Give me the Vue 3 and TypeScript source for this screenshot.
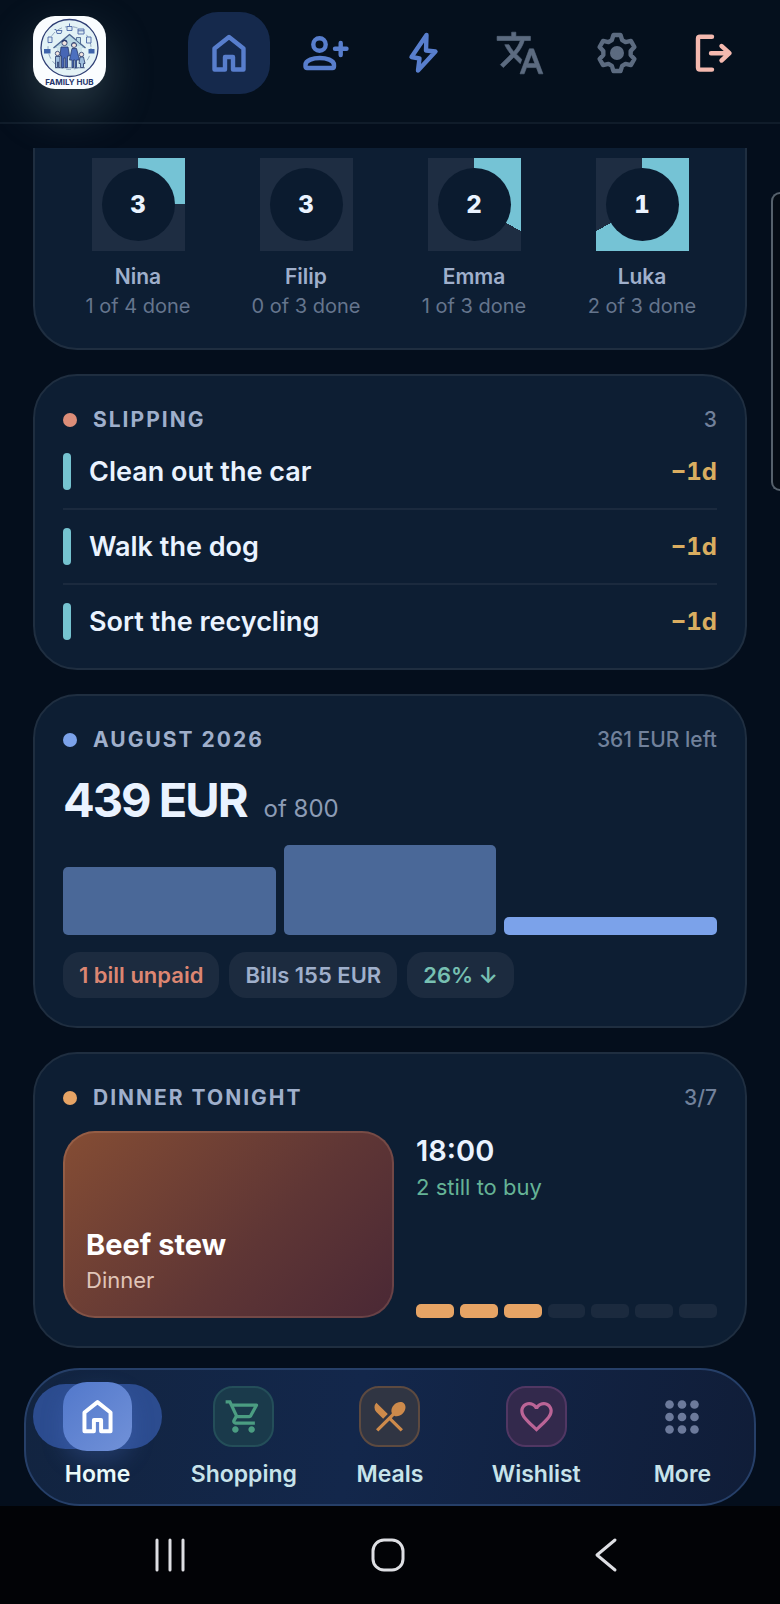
<script setup lang="ts">
interface Member {
  name: string
  left: number
  done: number
  total: number
}

interface Segment {
  id: number
  filled: boolean
}

const members: Member[] = [
  { name: 'Nina', left: 3, done: 1, total: 4 },
  { name: 'Filip', left: 3, done: 0, total: 3 },
  { name: 'Emma', left: 2, done: 1, total: 3 },
  { name: 'Luka', left: 1, done: 2, total: 3 },
]

const slipping = [
  { title: 'Clean out the car', late: '−1d' },
  { title: 'Walk the dog', late: '−1d' },
  { title: 'Sort the recycling', late: '−1d' },
]

const spending = [
  { id: 'june', share: 76, current: false },
  { id: 'july', share: 100, current: false },
  { id: 'august', share: 20, current: true },
]

const week: Segment[] = Array.from({ length: 7 }, (_, i) => ({ id: i, filled: i < 3 }))

const dots = [12, 25, 38].flatMap((y) => [12, 25, 38].map((x) => ({ x, y })))

const ringStyle = (m: Member) => {
  const turn = (m.done / m.total) * 360
  return { background: `conic-gradient(#75c3d5 ${turn}deg, #1e2d42 ${turn}deg)` }
}

const polar = (deg: number, r: number) => {
  const a = (deg * Math.PI) / 180
  return `${(25 + r * Math.cos(a)).toFixed(2)} ${(25 + r * Math.sin(a)).toFixed(2)}`
}

const gearPath =
  'M' +
  [0, 1, 2, 3, 4, 5]
    .flatMap((k) => {
      const a = k * 60 - 90
      return [polar(a - 22, 13.8), polar(a - 11, 18.4), polar(a + 11, 18.4), polar(a + 22, 13.8)]
    })
    .join('L') +
  'Z'

const homePath = 'M10.5 20.5 25 9 39.5 20.5V41.5H29V29H21V41.5H10.5Z'
</script>

<template>
  <div class="app">
    <header class="topbar">
      <svg class="logo" viewBox="0 0 73 73" role="img" aria-label="Family Hub">
        <rect width="73" height="73" fill="#fafdff" />
        <circle cx="36.500" cy="32" r="28.500" fill="#e3f2f6" stroke="#2f3f75" stroke-width="1.300" />
        <circle cx="36.500" cy="32" r="21.500" fill="none" stroke="#6d86a8" stroke-width=".7" stroke-dasharray="5 3" />
        <path d="M20.500 32 36.500 18.500 52.500 32" fill="#b9d8e4" stroke="#4c6591" stroke-width="1.400" stroke-linejoin="round" />
        <path d="M24 30h25v21H24z" fill="#cfe5ec" />
        <path d="M43.500 21.500h4v6.500l-4-3.500z" fill="#b9d8e4" stroke="#4c6591" stroke-width=".9" />
        <g fill="#dcebf2" stroke="#4a65a5" stroke-width=".9">
          <path d="M34 10.500h5v4h-5zM36.500 7.500v3" />
          <path d="M45 13h6v5h-6zM45 14.800h6" />
          <path d="M53.500 21h4.500v6h-4.500z" />
          <path d="M15 21h4v5.500h-4z" />
          <path d="M21.500 13.500h1.500l1 4h4l1-3h-5.500" />
        </g>
        <path d="M11 33h6.500v4.500H11zM55.500 33h6v4.500h-6z" fill="#3f64ab" />
        <path d="M22 51.800h30" stroke="#4c6591" stroke-width=".8" />
        <g stroke="#27386b" stroke-width=".8">
          <circle cx="31.500" cy="27" r="2.600" fill="#f1e4de" />
          <path d="M28 31h7l1.500 9h-2V51.500h-2.300V42h-1.200v9.500h-2.500V40h-1.500z" fill="#4766b5" />
          <circle cx="41" cy="29" r="2.500" fill="#f1e4de" />
          <path d="M39 32.500h4.500l3 11.500h-3V51.500h-1.500V44h-1.500v7.500H39V44h-2.500z" fill="#4c70bf" />
          <circle cx="24.500" cy="37.500" r="2.200" fill="#f1e4de" />
          <path d="M22.500 40.500h4.500V51.500h-1.500V46h-1v5.500h-2z" fill="#9dbddc" />
          <circle cx="48.500" cy="38.500" r="2.200" fill="#f1e4de" />
          <path d="M47 41h3.500l1.500 6.500h-1.500v4h-3v-4H46z" fill="#9dbddc" />
        </g>
        <path d="M28.600 26.500c0-4 5.800-4 5.800 0l-2.900-1.500zM38.400 31c-1-6 6-6 5.300 0l-1.200-3.500h-3z" fill="#27386b" />
        <text class="logo-text" x="36.500" y="69" text-anchor="middle">FAMILY HUB</text>
      </svg>

      <nav class="tools" aria-label="Quick actions">
        <button class="tool active" type="button" aria-label="Home">
          <svg viewBox="0 0 50 50" class="line"><path :d="homePath" /></svg>
        </button>
        <button class="tool" type="button" aria-label="Add member">
          <svg viewBox="0 0 50 50" class="line">
            <circle cx="18.500" cy="16.500" r="6.200" />
            <path d="M4.500 38.500V37C4.500 32 12.500 30 18.750 30S33 32 33 37V38.500Q33 40 31.500 40H6Q4.500 40 4.500 38.500ZM34 20.700H45.500M39.700 15V27" />
          </svg>
        </button>
        <button class="tool" type="button" aria-label="Quick add">
          <svg viewBox="0 0 50 50" class="line"><path d="M28.500 7 13.500 29 21.500 30.500 20 42.500 37.500 23.500 28 22.500Z" /></svg>
        </button>
        <button class="tool muted" type="button" aria-label="Language">
          <svg viewBox="0 0 24 24" fill="currentColor" stroke="currentColor" stroke-width=".3" stroke-linejoin="round">
            <path d="M12.870 15.070l-2.540-2.510.03-.03c1.740-1.940 2.980-4.170 3.710-6.530H17V4h-7V2H8v2H1v1.990h11.170C11.500 7.920 10.440 9.750 9 11.350 8.070 10.320 7.300 9.190 6.690 8h-2c.73 1.630 1.730 3.170 2.980 4.560l-5.090 5.020L4 19l5-5 3.110 3.110.76-2.040zM18.500 10h-2L12 22h2l1.120-3h4.750L21 22h2l-4.500-12zm-2.620 7l1.620-4.330L19.120 17h-3.240z" />
          </svg>
        </button>
        <button class="tool muted" type="button" aria-label="Settings">
          <svg viewBox="0 0 50 50" class="line">
            <path :d="gearPath" />
            <circle cx="25" cy="25" r="4.800" fill="currentColor" />
          </svg>
        </button>
        <button class="tool exit" type="button" aria-label="Log out">
          <svg viewBox="0 0 50 50" class="line"><path d="M23 8.700H11Q9 8.700 9 10.700V39.600Q9 41.600 11 41.600H23M22 25.200H39M32.500 18 40.500 25.200 32.500 32.500" /></svg>
        </button>
      </nav>
    </header>

    <main class="feed">
      <section class="card clipped" aria-label="Family progress">
        <ul class="members">
          <li v-for="m in members" :key="m.name" class="member">
            <div class="ring" :style="ringStyle(m)">
              <span class="ring-core">{{ m.left }}</span>
            </div>
            <span class="member-name">{{ m.name }}</span>
            <span class="member-sub">{{ m.done }} of {{ m.total }} done</span>
          </li>
        </ul>
      </section>

      <section class="card">
        <div class="card-head">
          <span class="dot coral"></span>
          <h2>Slipping</h2>
          <span class="meta">3</span>
        </div>
        <ul class="tasks">
          <li v-for="t in slipping" :key="t.title" class="task">
            <span class="task-bar"></span>
            <span class="task-title">{{ t.title }}</span>
            <span class="task-late">{{ t.late }}</span>
          </li>
        </ul>
      </section>

      <section class="card">
        <div class="card-head">
          <span class="dot blue"></span>
          <h2>August 2026</h2>
          <span class="meta">361 EUR left</span>
        </div>
        <p class="amount"><strong>439 EUR</strong><span>of 800</span></p>
        <div class="bars">
          <span
            v-for="b in spending"
            :key="b.id"
            class="bar"
            :class="{ current: b.current }"
            :style="{ height: b.share + '%' }"
          ></span>
        </div>
        <div class="chips">
          <span class="chip warn">1 bill unpaid</span>
          <span class="chip">Bills 155 EUR</span>
          <span class="chip good">26% ↓</span>
        </div>
      </section>

      <section class="card">
        <div class="card-head">
          <span class="dot amber"></span>
          <h2>Dinner tonight</h2>
          <span class="meta">3/7</span>
        </div>
        <div class="dinner">
          <div class="dish">
            <span class="dish-name">Beef stew</span>
            <span class="dish-kind">Dinner</span>
          </div>
          <div class="dinner-info">
            <span class="time">18:00</span>
            <span class="to-buy">2 still to buy</span>
            <div class="week">
              <span v-for="s in week" :key="s.id" class="day" :class="{ filled: s.filled }"></span>
            </div>
          </div>
        </div>
      </section>
    </main>

    <nav class="tabs" aria-label="Main">
      <a class="tab" href="#home" aria-current="page">
        <span class="slot current">
          <span class="tile tile-home">
            <svg viewBox="0 0 50 50" class="line"><path :d="homePath" /></svg>
          </span>
        </span>
        <span class="tab-label">Home</span>
      </a>
      <a class="tab" href="#shopping">
        <span class="slot">
          <span class="tile tile-shopping">
            <svg viewBox="0 0 24 24" fill="currentColor">
              <path d="M15.550 13c.75 0 1.410-.41 1.750-1.030l3.580-6.490A.996.996 0 0 0 20.010 4H5.210l-.94-2H1v2h2l3.600 7.590-1.350 2.440C4.520 15.370 5.480 17 7 17h12v-2H7l1.100-2h7.450zM6.160 6h12.150l-2.760 5H8.530L6.160 6zM7 18c-1.100 0-1.990.9-1.990 2S5.900 22 7 22s2-.9 2-2-.9-2-2-2zm10 0c-1.100 0-1.990.9-1.990 2s.89 2 1.990 2 2-.9 2-2-.9-2-2-2z" />
            </svg>
          </span>
        </span>
        <span class="tab-label">Shopping</span>
      </a>
      <a class="tab" href="#meals">
        <span class="slot">
          <span class="tile tile-meals">
            <svg viewBox="0 0 24 24" fill="currentColor">
              <path d="M8.100 13.340l2.830-2.830L3.910 3.500a4.008 4.008 0 0 0 0 5.660l4.190 4.180zm6.780-1.810c1.530.71 3.680.21 5.270-1.380 1.910-1.910 2.280-4.650.81-6.120-1.460-1.460-4.200-1.100-6.120.81-1.590 1.590-2.090 3.740-1.380 5.270L3.700 19.870l1.410 1.410L12 14.410l6.880 6.880 1.410-1.410L13.410 13l1.470-1.470z" />
            </svg>
          </span>
        </span>
        <span class="tab-label">Meals</span>
      </a>
      <a class="tab" href="#wishlist">
        <span class="slot">
          <span class="tile tile-wishlist">
            <svg viewBox="0 0 24 24" fill="currentColor">
              <path d="M16.500 3c-1.740 0-3.410.81-4.500 2.090C10.910 3.810 9.240 3 7.500 3 4.420 3 2 5.420 2 8.500c0 3.780 3.400 6.860 8.550 11.540L12 21.350l1.450-1.320C18.600 15.360 22 12.280 22 8.500 22 5.420 19.580 3 16.500 3zm-4.400 15.550l-.1.1-.1-.1C7.140 14.240 4 11.390 4 8.500 4 6.500 5.500 5 7.500 5c1.540 0 3.040.99 3.570 2.360h1.870C13.460 5.990 14.960 5 16.500 5c2 0 3.500 1.500 3.500 3.500 0 2.890-3.140 5.740-7.900 10.050z" />
            </svg>
          </span>
        </span>
        <span class="tab-label">Wishlist</span>
      </a>
      <a class="tab" href="#more">
        <span class="slot">
          <span class="tile tile-more">
            <svg viewBox="0 0 50 50" fill="currentColor">
              <circle v-for="d in dots" :key="d.x + '-' + d.y" :cx="d.x" :cy="d.y" r="4.500" />
            </svg>
          </span>
        </span>
        <span class="tab-label">More</span>
      </a>
    </nav>

    <footer class="system">
      <button type="button" aria-label="Recent apps">
        <svg viewBox="0 0 36 36"><path d="M5 3V33M18 3V33M31 3V33" /></svg>
      </button>
      <button type="button" aria-label="Home screen">
        <svg viewBox="0 0 36 36"><rect x="3" y="3" width="30" height="30" rx="11" /></svg>
      </button>
      <button type="button" aria-label="Back">
        <svg viewBox="0 0 36 36"><path d="M27 3 9 18 27 33" /></svg>
      </button>
    </footer>

    <div class="edge-panel" aria-hidden="true"></div>
  </div>
</template>

<style>
html,
body {
  background: #020306;
}
</style>

<style scoped>
.app {
  position: relative;
  display: flex;
  flex-direction: column;
  min-height: 100vh;
  overflow: hidden;
  background: #040e1c;
  color: #eaf3ff;
  font-family: Inter, 'Liberation Sans', sans-serif;
  font-size: 21px;
}

.app *,
.app {
  box-sizing: border-box;
}

ul,
p,
h2 {
  margin: 0;
  padding: 0;
  list-style: none;
}

button {
  padding: 0;
  border: 0;
  background: none;
  color: inherit;
  font: inherit;
  cursor: pointer;
}

.line {
  fill: none;
  stroke: currentColor;
  stroke-width: 4.4;
  stroke-linecap: round;
  stroke-linejoin: round;
}

.topbar {
  display: flex;
  align-items: flex-start;
  justify-content: space-between;
  padding: 12px 25px 28px 33px;
  border-bottom: 2px solid #101c2a;
  background: #05101d;
}

.logo {
  width: 73px;
  height: 73px;
  margin-top: 4px;
  border-radius: 22px;
  box-shadow: 0 20px 48px rgba(150, 185, 190, 0.26);
}

.logo-text {
  fill: #26356b;
  font-size: 8px;
  font-weight: 700;
}

.tools {
  display: flex;
  gap: 15px;
}

.tool {
  display: grid;
  place-items: center;
  width: 82px;
  height: 82px;
  border-radius: 30px;
  color: #587ecd;
}

.tool svg {
  width: 50px;
  height: 50px;
}

.tool.active {
  background: #15294c;
}

.tool.muted {
  color: #5c6b80;
}

.tool.exit {
  color: #f4b9af;
}

.feed {
  display: flex;
  flex-direction: column;
  gap: 24px;
  padding: 24px 33px 20px;
}

.card {
  display: flex;
  flex-direction: column;
  gap: 18px;
  padding: 28px;
  border: 2px solid #1f2e40;
  border-radius: 44px;
  background: #0d1e33;
}

.card.clipped {
  padding-top: 10px;
  border-top: 0;
  border-radius: 0 0 44px 44px;
}

.card-head {
  display: flex;
  align-items: center;
  gap: 16px;
  height: 31px;
}

.card-head h2 {
  flex: 1;
  color: #9fafcb;
  font-size: 21px;
  font-weight: 700;
  letter-spacing: 2px;
  text-transform: uppercase;
}

.dot {
  width: 14px;
  height: 14px;
  border-radius: 50%;
}

.coral {
  background: #dc8d78;
}

.blue {
  background: #7ba2ea;
}

.amber {
  background: #e6a465;
}

.meta {
  color: #71819b;
  font-weight: 500;
}

.members {
  display: grid;
  grid-template-columns: repeat(4, 1fr);
  gap: 18px;
}

.member {
  display: flex;
  flex-direction: column;
  align-items: center;
}

.ring {
  display: grid;
  place-items: center;
  width: 93px;
  height: 93px;
  margin-bottom: 11px;
}

.ring-core {
  display: grid;
  place-items: center;
  width: 73px;
  height: 73px;
  border-radius: 50%;
  background: #0b1b2f;
  font-size: 24px;
  font-weight: 800;
  font-variant-numeric: tabular-nums;
}

.member-name {
  color: #9fafcb;
  font-size: 21px;
  font-weight: 600;
  line-height: 30px;
}

.member-sub {
  color: #65758d;
  font-size: 20px;
  line-height: 28px;
  white-space: nowrap;
}

.task {
  display: flex;
  align-items: center;
  gap: 18px;
  padding: 18px 0;
  border-bottom: 2px solid #1b2a3e;
}

.task:first-child {
  padding-top: 0;
}

.task:last-child {
  padding-bottom: 0;
  border-bottom: 0;
}

.task-bar {
  width: 8px;
  height: 37px;
  border-radius: 4px;
  background: #75c3d0;
}

.task-title {
  flex: 1;
  font-size: 27px;
  font-weight: 600;
  line-height: 36px;
}

.task-late {
  color: #d9ad60;
  font-size: 24px;
  font-weight: 700;
  font-variant-numeric: tabular-nums;
}

.amount {
  display: flex;
  align-items: baseline;
  gap: 17px;
  height: 54px;
  line-height: 54px;
}

.amount strong {
  font-size: 47px;
  font-weight: 700;
  letter-spacing: -2px;
}

.amount span {
  color: #8c9bb5;
  font-size: 24px;
}

.bars {
  display: grid;
  grid-template-columns: repeat(3, 1fr);
  align-items: end;
  gap: 8px;
  height: 90px;
}

.bar {
  border-radius: 5px;
  background: #4a6898;
}

.bar.current {
  background: #7ba2ea;
}

.chips {
  display: flex;
  gap: 10px;
  margin-top: -1px;
}

.chip {
  padding: 0 16px;
  border-radius: 17px;
  background: #1c2b3f;
  color: #9fafcb;
  font-size: 22px;
  font-weight: 600;
  line-height: 46px;
}

.chip.warn {
  color: #dc8672;
}

.chip.good {
  color: #77c0b2;
}

.dinner {
  display: grid;
  grid-template-columns: 11fr 10fr;
  gap: 22px;
  min-height: 187px;
}

.dish {
  display: flex;
  flex-direction: column;
  justify-content: flex-end;
  padding: 20px 21px;
  border: 2px solid rgba(255, 190, 160, 0.16);
  border-radius: 32px;
  background: linear-gradient(135deg, #854d34, #5f3635 58%, #4a2835) border-box;
}

.dish-name {
  color: #ffffff;
  font-size: 29px;
  font-weight: 700;
  line-height: 38px;
}

.dish-kind {
  color: #e0c5b8;
  font-size: 22px;
  line-height: 32px;
}

.dinner-info {
  display: flex;
  flex-direction: column;
}

.time {
  font-size: 29px;
  font-weight: 600;
  line-height: 40px;
}

.to-buy {
  color: #65b396;
  font-size: 22px;
  line-height: 32px;
}

.week {
  display: grid;
  grid-template-columns: repeat(7, 1fr);
  gap: 6px;
  margin-top: auto;
}

.day {
  height: 14px;
  border-radius: 5px;
  background: #1b2a3e;
}

.day.filled {
  background: #e6a465;
}

.tabs {
  display: grid;
  grid-template-columns: repeat(5, 1fr);
  gap: 17px;
  margin: 0 24px;
  padding: 14px 7px 16px;
  border: 2px solid #263f68;
  border-radius: 56px;
  background: linear-gradient(100deg, #122440, #13274b 45%, #101d38);
}

.tab {
  display: flex;
  flex-direction: column;
  align-items: center;
  gap: 11px;
  color: #c7e3ea;
  text-decoration: none;
}

.slot {
  display: flex;
  align-items: center;
  align-self: stretch;
  justify-content: center;
  height: 65px;
  border-radius: 33px;
}

.slot.current {
  background: #2c4c8f;
}

.tile {
  display: grid;
  flex: none;
  place-items: center;
  width: 61px;
  height: 61px;
  border: 2px solid transparent;
  border-radius: 20px;
}

.tile svg {
  width: 39px;
  height: 39px;
}

.tile-home {
  width: 69px;
  height: 69px;
  border: 0;
  border-radius: 24px;
  background: linear-gradient(135deg, #5278cb, #7191d8);
  box-shadow: 0 10px 22px rgba(80, 120, 210, 0.25);
  color: #ffffff;
}

.tile-home svg {
  width: 45px;
  height: 45px;
}

.tile-shopping {
  border-color: #244e59;
  background: #1a3a4b;
  color: #4b9d82;
}

.tile-meals {
  border-color: #5d4a40;
  background: #303543;
  color: #cd8a4b;
}

.tile-wishlist {
  border-color: #513763;
  background: #33294c;
  color: #bb6496;
}

.tile-more {
  color: #6c7a9b;
}

.tile-more svg {
  width: 48px;
  height: 48px;
}

.tab-label {
  font-size: 23px;
  font-weight: 600;
  line-height: 28px;
}

.tab[aria-current] .tab-label {
  color: #eafaf9;
}

.system {
  display: flex;
  flex: 1;
  align-items: center;
  justify-content: center;
  gap: 146px;
  min-height: 98px;
  padding-right: 4px;
  background: #020306;
  color: #dedfe3;
}

.system button {
  display: grid;
  place-items: center;
  width: 72px;
  height: 72px;
}

.system svg {
  width: 36px;
  height: 36px;
  fill: none;
  stroke: currentColor;
  stroke-width: 3;
  stroke-linecap: round;
  stroke-linejoin: round;
}

.edge-panel {
  position: absolute;
  top: 192px;
  right: 0;
  width: 9px;
  height: 299px;
  border: 2px solid #56616c;
  border-right: 0;
  border-radius: 9px 0 0 9px;
  background: #050c15;
}
</style>
